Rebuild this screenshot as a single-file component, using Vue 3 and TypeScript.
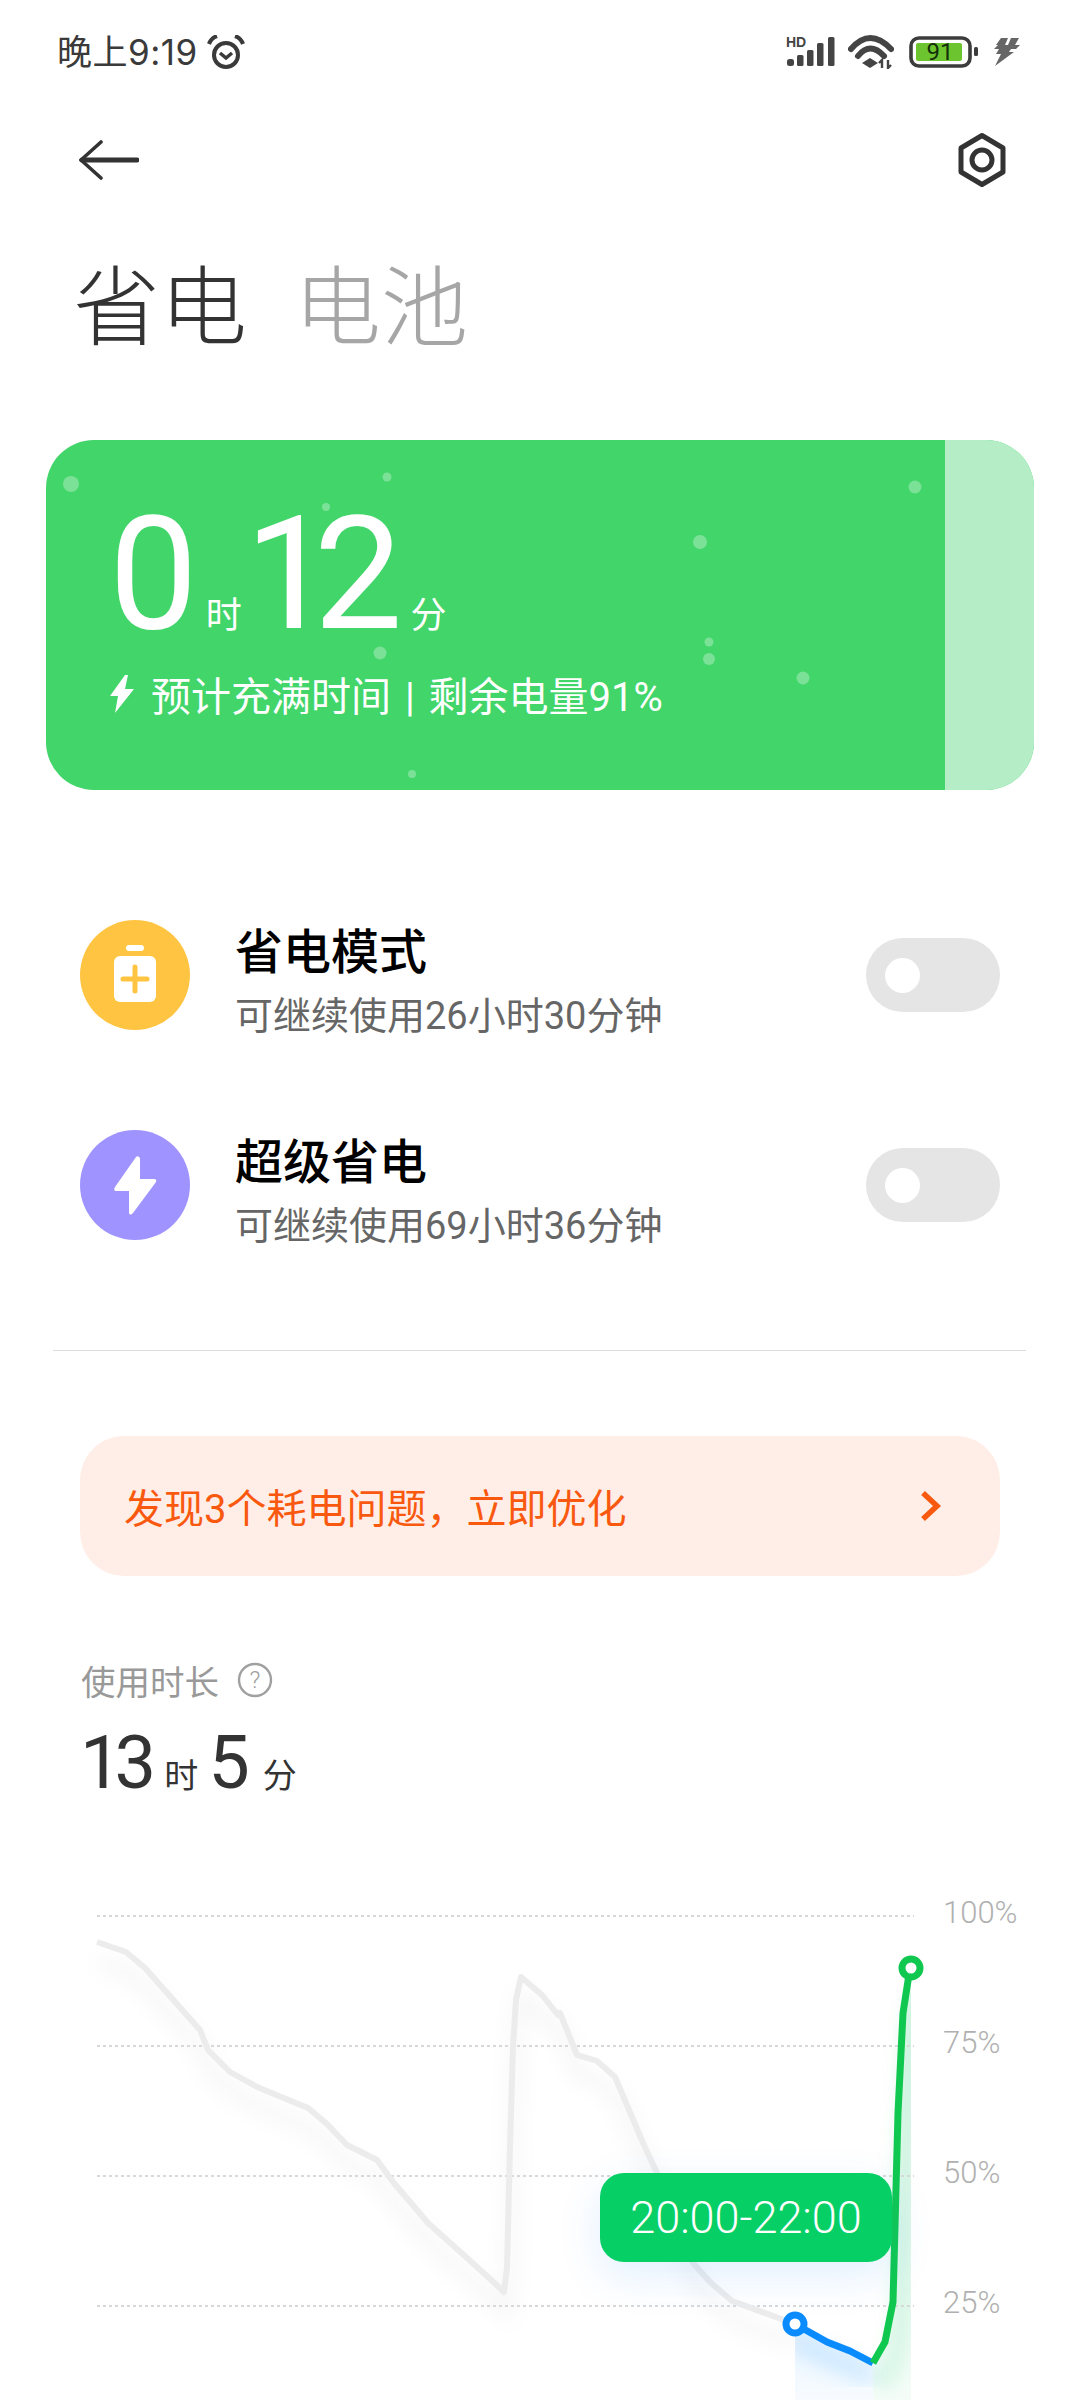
<script setup lang="ts">
interface Mode {
  title: string
  sub: string
  color: string
  kind: string
}

const modes: Mode[] = [
  { title: '省电模式', sub: '可继续使用26小时30分钟', color: '#ffc542', kind: 'battery' },
  { title: '超级省电', sub: '可继续使用69小时36分钟', color: '#9f94ff', kind: 'bolt' },
]

// bubbles floating in the charge card [x, y, r], relative to the card
const bubbles: number[][] = [
  [25, 44, 8], [341, 37, 4.5], [869, 47, 6.5], [280, 67, 4], [654, 102, 7],
  [663, 202, 4.5], [663, 219, 6], [334, 213, 6.5], [757, 238, 6.5], [366, 334, 4],
]

const levels = [
  { label: '100%', y: 1916 },
  { label: '75%', y: 2046 },
  { label: '50%', y: 2176 },
  { label: '25%', y: 2306 },
]

const grayLine = '97,1942 126,1952 145,1968 200,2030 208,2050 230,2072 257,2087 308,2108 327,2124 347,2145 377,2160 393,2182 428,2223 467,2258 487,2276 504,2292 507,2268 510,2147 513,2047 516,2000 521,1977 542,1995 558,2015 560,2013 577,2055 597,2061 615,2077 643,2143 657,2173 693,2263 710,2282 732,2301 795,2324'
const blueLine = '795,2324 827,2342 850,2351 873,2363'
const greenLine = '873,2363 885,2342 893,2302 898,2113 903,2013 910,1968'
</script>

<template>
  <div class="page">
    <div class="status">
      <div class="status-left">
        <span class="clock-text">晚上9:19</span>
        <svg class="alarm" width="38" height="34" viewBox="0 0 38 34">
          <circle cx="19" cy="20" r="12" fill="none" stroke="#3a3a3a" stroke-width="4" />
          <path d="M13 18l6 5 6-5" fill="none" stroke="#3a3a3a" stroke-width="3.5" />
          <path d="M2 9Q4 3 10 1M36 9Q34 3 28 1" fill="none" stroke="#3a3a3a" stroke-width="4" />
        </svg>
      </div>
      <div class="status-right">
        <svg width="50" height="40" viewBox="0 -4 50 40">
          <text x="1" y="11" class="hd">HD</text>
          <rect x="2" y="23" width="7" height="7" rx="2.5" fill="#444" />
          <rect x="12" y="19" width="6.5" height="11" rx="1.5" fill="#444" />
          <rect x="22" y="14" width="6.5" height="16" rx="1.5" fill="#444" />
          <rect x="32" y="7" width="6.5" height="23" rx="1.5" fill="#444" />
          <rect x="43" y="1" width="6.5" height="29" rx="1.5" fill="#444" />
        </svg>
        <svg class="wifi" width="46" height="34" viewBox="0 0 46 34">
          <path d="M3 14Q22 -8 43 14" fill="none" stroke="#444" stroke-width="6" stroke-linecap="round" />
          <path d="M10 21Q22 6 36 21" fill="none" stroke="#444" stroke-width="6" stroke-linecap="round" />
          <path d="M22 23l8 5-8 5-8-5z" fill="#444" />
          <path d="M34 33v-8l-3 3M40 25v8l3-3" fill="none" stroke="#444" stroke-width="2.4" />
        </svg>
        <svg class="batt" width="70" height="32" viewBox="0 0 70 32">
          <rect x="2" y="2" width="59" height="28" rx="8" fill="none" stroke="#3c3c3c" stroke-width="3.6" />
          <rect x="7" y="7" width="46" height="18" rx="2" fill="#6cc52f" />
          <rect x="65" y="11" width="4" height="9" rx="1.5" fill="#3c3c3c" />
          <text x="31" y="24" text-anchor="middle" class="batt-num">91</text>
        </svg>
        <svg class="charge" width="28" height="30" viewBox="0 0 28 30">
          <path d="M9 1h7l-3 7h3l3-7h8l-4 7h5l-4 4h-5l-2 3h5L3 29l6-12H4l3-5H2l4-4H4z" fill="#666" />
        </svg>
      </div>
    </div>

    <div class="nav">
      <svg width="60" height="60" viewBox="0 0 60 60">
        <path d="M3 30h55" fill="none" stroke="#333" stroke-width="5" stroke-linecap="round" />
        <path d="M22 12L2 30l20 18" fill="none" stroke="#333" stroke-width="3.6" stroke-linecap="round" />
      </svg>
      <svg width="60" height="60" viewBox="0 0 60 60">
        <path d="M30 5.5L51 18v24L30 54.5 9 42V18z" fill="none" stroke="#333" stroke-width="5" stroke-linejoin="round" />
        <circle cx="30" cy="30" r="10" fill="none" stroke="#333" stroke-width="5" />
      </svg>
    </div>

    <div class="tabs">
      <span class="tab active">省电</span>
      <span class="tab">电池</span>
    </div>

    <div class="hero">
      <div class="hero-rest"></div>
      <svg class="bubbles" width="988" height="350" viewBox="0 0 988 350">
        <circle v-for="(b, i) in bubbles" :key="i" :cx="b[0]" :cy="b[1]" :r="b[2]" fill="#fff" fill-opacity="0.3" />
      </svg>
      <div class="hero-time">
        <span class="num">0</span><span class="unit">时</span>
        <span class="num num-b">12</span><span class="unit">分</span>
      </div>
      <div class="hero-note">
        <svg width="24" height="38" viewBox="0 0 24 38">
          <path d="M15 0L0 21h8L5 38l19-24h-9l3-14z" fill="#fff" />
        </svg>
        <span>预计充满时间 | 剩余电量91%</span>
      </div>
    </div>

    <div class="modes">
      <div v-for="m in modes" :key="m.title" class="mode">
        <svg class="mode-icon" width="110" height="110" viewBox="0 0 110 110">
          <circle cx="55" cy="55" r="55" :fill="m.color" />
          <template v-if="m.kind === 'battery'">
            <rect x="46" y="25" width="18" height="6" rx="3" fill="#fff" />
            <rect x="34" y="36" width="42" height="46" rx="6" fill="#fff" />
            <path d="M43 59h24M55 47v24" stroke="#ffc542" stroke-width="5" stroke-linecap="round" />
          </template>
          <path v-else d="M56 27L35 57Q33 61 36 61L49 61L49 83Q50 86 53 83L76 52Q77 50 75 49L60 49L60 28Q58 25 56 27Z" fill="#fff" />
        </svg>
        <div class="mode-text">
          <div class="mode-title">{{ m.title }}</div>
          <div class="mode-sub">{{ m.sub }}</div>
        </div>
        <div class="toggle"><div class="knob"></div></div>
      </div>
    </div>

    <div class="divider"></div>

    <div class="banner">
      <span>发现3个耗电问题，立即优化</span>
      <svg width="24" height="34" viewBox="0 0 24 34">
        <path d="M5 4l14 13L5 30" fill="none" stroke="#f9590f" stroke-width="5.5" />
      </svg>
    </div>

    <div class="usage-label">
      <span>使用时长</span>
      <svg width="36" height="36" viewBox="0 0 36 36">
        <circle cx="18" cy="18" r="16" fill="none" stroke="#a0a0a0" stroke-width="2.4" />
        <text x="18" y="26" text-anchor="middle" class="q">?</text>
      </svg>
    </div>
    <div class="usage-value">
      <span class="big">13</span><span class="small">时</span>
      <span class="big">5</span><span class="small">分</span>
    </div>

    <div class="chart">
      <svg class="chart-svg" width="1080" height="520" viewBox="0 1880 1080 520">
        <defs>
          <filter id="soft" x="-20%" y="-20%" width="140%" height="140%">
            <feGaussianBlur stdDeviation="10" />
          </filter>
          <clipPath id="range"><rect x="795" y="1880" width="116" height="520" /></clipPath>
          <linearGradient id="blueFade" x1="0" y1="0" x2="0" y2="1">
            <stop offset="0" stop-color="#0a8cff" stop-opacity="0.1" />
            <stop offset="1" stop-color="#0a8cff" stop-opacity="0.03" />
          </linearGradient>
          <linearGradient id="greenFade" x1="0" y1="0" x2="0" y2="1">
            <stop offset="0" stop-color="#10c860" stop-opacity="0.12" />
            <stop offset="1" stop-color="#10c860" stop-opacity="0.04" />
          </linearGradient>
        </defs>
        <polyline :points="grayLine" transform="translate(2 20)" fill="none" stroke="#000" stroke-opacity="0.04" stroke-width="12" filter="url(#soft)" />
        <polygon points="795,2324 827,2342 850,2351 873,2363 873,2400 795,2400" fill="url(#blueFade)" />
        <polygon points="873,2363 885,2342 893,2302 898,2113 903,2013 910,1968 911,1968 911,2400 873,2400" fill="url(#greenFade)" />
        <g clip-path="url(#range)">
          <polyline :points="blueLine" transform="translate(0 16)" fill="none" stroke="#0a8cff" stroke-opacity="0.22" stroke-width="12" filter="url(#soft)" />
          <polyline :points="greenLine" transform="translate(8 24)" fill="none" stroke="#10c860" stroke-opacity="0.2" stroke-width="12" filter="url(#soft)" />
        </g>
        <g v-for="l in levels" :key="l.label">
          <line x1="97" :y1="l.y" x2="914" :y2="l.y" stroke="#d8d8d8" stroke-width="2" stroke-dasharray="3 3" />
          <text x="943" :y="l.y + 7" class="level">{{ l.label }}</text>
        </g>
        <polyline :points="grayLine" fill="none" stroke="#ececec" stroke-width="6" stroke-linejoin="round" />
        <polyline :points="blueLine" fill="none" stroke="#0a8cff" stroke-width="7" stroke-linejoin="round" />
        <polyline :points="greenLine" fill="none" stroke="#10c850" stroke-width="7" stroke-linejoin="round" />
        <circle cx="795" cy="2324" r="9" fill="#fff" stroke="#0a8cff" stroke-width="7" />
        <circle cx="911" cy="1968" r="9" fill="#fff" stroke="#10c850" stroke-width="7" />
      </svg>
      <div class="tip">20:00-22:00</div>
    </div>
  </div>
</template>

<style>
html, body {
  margin: 0;
  background: #fff;
}
</style>

<style scoped>
.page {
  position: relative;
  width: 1080px;
  height: 2400px;
  overflow: hidden;
  background: #fff;
  font-family: Roboto, "Noto Sans CJK SC", sans-serif;
}

.status {
  display: flex;
  justify-content: space-between;
  align-items: center;
  height: 36px;
  padding: 34px 60px 0 57px;
}
.status-left, .status-right {
  display: flex;
  align-items: center;
}
.clock-text {
  padding-bottom: 6px;
  font-family: Inter, "Noto Sans CJK SC", sans-serif;
  font-size: 35px;
  letter-spacing: 0.5px;
  color: #3a3a3a;
}
.alarm {
  margin-left: 9px;
}
.status-right svg {
  flex-shrink: 0;
}
.hd {
  font: 700 14px "Liberation Sans", sans-serif;
  fill: #444;
}
.wifi {
  margin-left: 13px;
}
.batt {
  margin-left: 15px;
}
.batt-num {
  font: 400 24px Roboto, sans-serif;
  fill: #14300a;
}
.charge {
  margin-left: 13px;
}

.nav {
  display: flex;
  justify-content: space-between;
  margin-top: 60px;
  padding: 0 68px 0 79px;
  height: 60px;
}

.tabs {
  display: flex;
  gap: 47px;
  margin-top: 69px;
  padding-left: 73px;
  height: 100px;
  line-height: 100px;
}
.tab {
  font-size: 87px;
  font-weight: 200;
  color: #a6a6a6;
}
.tab.active {
  color: #333;
}

.hero {
  position: relative;
  overflow: hidden;
  margin: 81px 46px 0;
  height: 350px;
  border-radius: 48px;
  background: #41d56a;
  color: #fff;
}
.hero-rest {
  position: absolute;
  top: 0;
  right: 0;
  bottom: 0;
  width: 89px;
  background: #b5eec6;
}
.bubbles {
  position: absolute;
  top: 0;
  left: 0;
}
.hero-time {
  position: relative;
  display: flex;
  align-items: baseline;
  padding: 54px 0 0 63px;
  height: 160px;
}
.num {
  font-size: 158px;
  line-height: 160px;
  font-weight: 400;
  letter-spacing: -20px;
}
.num-b {
  margin-left: 3px;
}
.unit {
  font-size: 36px;
  margin-left: 28px;
}
.hero-note {
  position: relative;
  display: flex;
  align-items: center;
  gap: 17px;
  margin-top: 11px;
  padding-left: 64px;
  font-size: 40px;
  word-spacing: 4px;
}

.modes {
  display: flex;
  flex-direction: column;
  gap: 100px;
  margin-top: 130px;
  padding: 0 80px;
}
.mode {
  display: flex;
  align-items: center;
  height: 110px;
}
.mode-icon {
  flex-shrink: 0;
}
.mode-text {
  flex: 1;
  margin-left: 45px;
  padding-top: 13px;
}
.mode-title {
  font-size: 48px;
  line-height: 60px;
  font-weight: 500;
  color: #000;
}
.mode-sub {
  margin-top: 8px;
  font-size: 38px;
  line-height: 50px;
  color: #666;
}
.toggle {
  display: flex;
  align-items: center;
  width: 134px;
  height: 74px;
  border-radius: 37px;
  background: #e5e5e5;
}
.knob {
  width: 35px;
  height: 35px;
  margin-left: 19px;
  border-radius: 50%;
  background: #fff;
}

.divider {
  height: 1px;
  margin: 110px 54px 0 53px;
  background: #dcdcdc;
}

.banner {
  display: flex;
  justify-content: space-between;
  align-items: center;
  height: 140px;
  margin: 85px 80px 0;
  padding: 0 58px 0 44px;
  border-radius: 44px;
  background: #ffeee7;
  color: #f9590f;
  font-size: 40px;
}

.usage-label {
  display: flex;
  align-items: center;
  gap: 18px;
  height: 40px;
  margin-top: 84px;
  padding-left: 81px;
  font-size: 34.5px;
  color: #999;
}
.q {
  font: 300 24px Roboto, sans-serif;
  fill: #a0a0a0;
}
.usage-value {
  display: flex;
  align-items: baseline;
  margin-top: 23px;
  padding-left: 80px;
  color: #333;
  height: 80px;
}
.big {
  font-size: 74px;
  line-height: 80px;
  letter-spacing: -7px;
}
.small {
  font-size: 34px;
  margin: 0 10px 0 15px;
}
.small:last-child {
  margin-left: 20px;
}

.chart {
  position: absolute;
  top: 1880px;
  left: 0;
  width: 1080px;
  height: 520px;
}
.chart-svg {
  display: block;
}
.level {
  font: 300 31px Roboto, sans-serif;
  fill: #b0b0b0;
}
.tip {
  position: absolute;
  left: 600px;
  top: 293px;
  width: 292px;
  height: 89px;
  line-height: 89px;
  text-align: center;
  border-radius: 24px;
  background: #06cf66;
  color: #fff;
  font-size: 45px;
  font-weight: 300;
  box-shadow: 0 14px 44px rgba(0, 130, 255, 0.12);
}
</style>
